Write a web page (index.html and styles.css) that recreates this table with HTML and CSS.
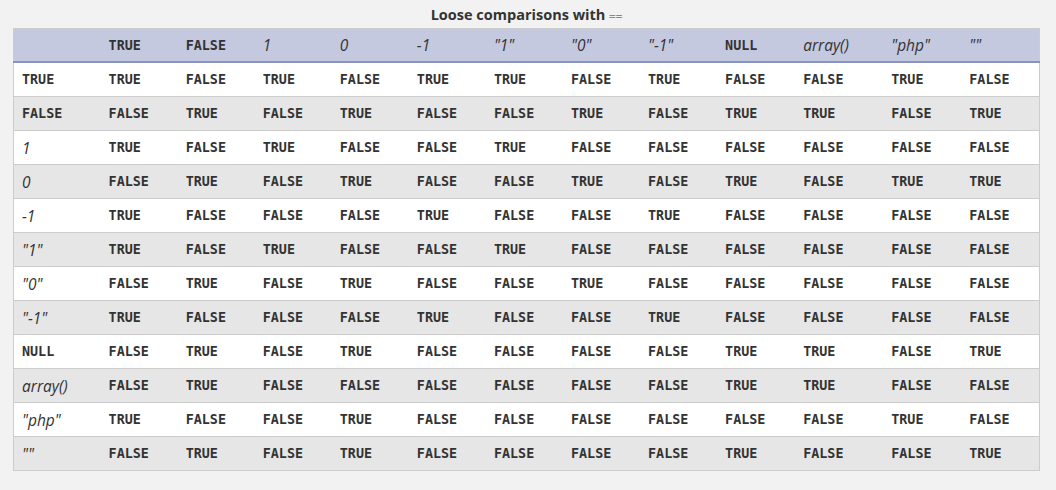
FILE: index.html
```html
<!DOCTYPE html>
<html>
<head>
<meta charset="utf-8">
<link rel="stylesheet" href="styles.css">
</head>
<body>
<table class="cmp">
<caption class="cap">Loose comparisons with <code class="op">==</code></caption>
<colgroup>
<col class="c-first"><col class="c"><col class="c"><col class="c"><col class="c"><col class="c"><col class="c"><col class="c"><col class="c"><col class="c78"><col class="c88"><col class="c78"><col class="c78">
</colgroup>
<thead>
<tr><th></th><th class="k">TRUE</th><th class="k">FALSE</th><th class="v">1</th><th class="v">0</th><th class="v">-1</th><th class="v">"1"</th><th class="v">"0"</th><th class="v">"-1"</th><th class="k">NULL</th><th class="v">array()</th><th class="v">"php"</th><th class="v">""</th></tr>
</thead>
<tbody>
<tr><td class="k">TRUE</td><td>TRUE</td><td>FALSE</td><td>TRUE</td><td>FALSE</td><td>TRUE</td><td>TRUE</td><td>FALSE</td><td>TRUE</td><td>FALSE</td><td>FALSE</td><td>TRUE</td><td>FALSE</td></tr>
<tr><td class="k">FALSE</td><td>FALSE</td><td>TRUE</td><td>FALSE</td><td>TRUE</td><td>FALSE</td><td>FALSE</td><td>TRUE</td><td>FALSE</td><td>TRUE</td><td>TRUE</td><td>FALSE</td><td>TRUE</td></tr>
<tr><td class="v">1</td><td>TRUE</td><td>FALSE</td><td>TRUE</td><td>FALSE</td><td>FALSE</td><td>TRUE</td><td>FALSE</td><td>FALSE</td><td>FALSE</td><td>FALSE</td><td>FALSE</td><td>FALSE</td></tr>
<tr><td class="v">0</td><td>FALSE</td><td>TRUE</td><td>FALSE</td><td>TRUE</td><td>FALSE</td><td>FALSE</td><td>TRUE</td><td>FALSE</td><td>TRUE</td><td>FALSE</td><td>TRUE</td><td>TRUE</td></tr>
<tr><td class="v">-1</td><td>TRUE</td><td>FALSE</td><td>FALSE</td><td>FALSE</td><td>TRUE</td><td>FALSE</td><td>FALSE</td><td>TRUE</td><td>FALSE</td><td>FALSE</td><td>FALSE</td><td>FALSE</td></tr>
<tr><td class="v">"1"</td><td>TRUE</td><td>FALSE</td><td>TRUE</td><td>FALSE</td><td>FALSE</td><td>TRUE</td><td>FALSE</td><td>FALSE</td><td>FALSE</td><td>FALSE</td><td>FALSE</td><td>FALSE</td></tr>
<tr><td class="v">"0"</td><td>FALSE</td><td>TRUE</td><td>FALSE</td><td>TRUE</td><td>FALSE</td><td>FALSE</td><td>TRUE</td><td>FALSE</td><td>FALSE</td><td>FALSE</td><td>FALSE</td><td>FALSE</td></tr>
<tr><td class="v">"-1"</td><td>TRUE</td><td>FALSE</td><td>FALSE</td><td>FALSE</td><td>TRUE</td><td>FALSE</td><td>FALSE</td><td>TRUE</td><td>FALSE</td><td>FALSE</td><td>FALSE</td><td>FALSE</td></tr>
<tr><td class="k">NULL</td><td>FALSE</td><td>TRUE</td><td>FALSE</td><td>TRUE</td><td>FALSE</td><td>FALSE</td><td>FALSE</td><td>FALSE</td><td>TRUE</td><td>TRUE</td><td>FALSE</td><td>TRUE</td></tr>
<tr><td class="v">array()</td><td>FALSE</td><td>TRUE</td><td>FALSE</td><td>FALSE</td><td>FALSE</td><td>FALSE</td><td>FALSE</td><td>FALSE</td><td>TRUE</td><td>TRUE</td><td>FALSE</td><td>FALSE</td></tr>
<tr><td class="v">"php"</td><td>TRUE</td><td>FALSE</td><td>FALSE</td><td>TRUE</td><td>FALSE</td><td>FALSE</td><td>FALSE</td><td>FALSE</td><td>FALSE</td><td>FALSE</td><td>TRUE</td><td>FALSE</td></tr>
<tr><td class="v">""</td><td>FALSE</td><td>TRUE</td><td>FALSE</td><td>TRUE</td><td>FALSE</td><td>FALSE</td><td>FALSE</td><td>FALSE</td><td>TRUE</td><td>FALSE</td><td>FALSE</td><td>TRUE</td></tr>
</tbody>
</table>
</body>
</html>
```
FILE: styles.css
```css
html, body {
  margin: 0;
  padding: 0;
  background: #f2f2f2;
}
body {
  padding: 3px 16px 0 13px;
  font-family: "Open Sans", "Noto Sans", sans-serif;
  color: #333;
}
.cmp {
  border-collapse: collapse;
  table-layout: fixed;
  width: 1027px;
  border: 1px solid #cccccc;
}
.cap {
  font-weight: 700;
  font-size: 14.5px;
  line-height: 23px;
  color: #333;
  text-align: center;
  padding-left: 0;
}
.op {
  font-family: "DejaVu Sans Mono", monospace;
  font-weight: 400;
  font-size: 11px;
  color: #888;
}
.c-first { width: 87px; }
.c { width: 77px; }
.c78 { width: 78px; }
.c88 { width: 88px; }
th, td {
  height: 33px;
  padding: 0 8px;
  text-align: left;
  vertical-align: middle;
  font-family: "DejaVu Sans Mono", monospace;
  font-weight: 700;
  font-size: 13.4px;
  color: #333;
  white-space: nowrap;
  overflow: hidden;
}
thead tr {
  background: #c4c9df;
  border-bottom: 2px solid #8892bf;
}
thead th { height: 32px; }
tbody tr {
  border-bottom: 1px solid #cccccc;
}
tbody tr:nth-child(odd) { background: #ffffff; }
tbody tr:nth-child(even) { background: #e6e6e6; }
.k {
  font-family: "DejaVu Sans Mono", monospace;
  font-weight: 700;
}
.v {
  font-family: "Open Sans", "Noto Sans", sans-serif;
  font-style: italic;
  font-weight: 400;
  font-size: 15.5px;
  color: #333;
}
```
